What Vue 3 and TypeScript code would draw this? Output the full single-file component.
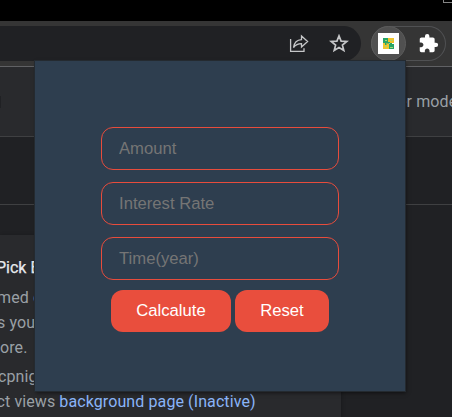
<script setup lang="ts">
import { ref } from 'vue'

interface Field {
  name: string
  placeholder: string
}

const fields: Field[] = [
  { name: 'amount', placeholder: 'Amount' },
  { name: 'rate', placeholder: 'Interest Rate' },
  { name: 'time', placeholder: 'Time(year)' },
]
const values = ref<Record<string, string>>({ amount: '', rate: '', time: '' })

function reset(): void {
  values.value = { amount: '', rate: '', time: '' }
}
</script>

<template>
  <div class="window">
    <div class="titlebar"><span class="control"></span></div>
    <div class="toolbar">
      <div class="omnibox">
        <svg class="share" width="20" height="19" viewBox="0 0 20 19">
          <path d="M1.6 5V17.3H15V14.2M4.5 13.5C5.2 8.8 8 6 12.5 5.7V2L18.6 7.6L12.5 13V9.6C9 9.6 6.6 10.7 4.5 13.5Z" />
        </svg>
        <svg class="star" width="20" height="19" viewBox="0 0 20 19">
          <path d="M10 1.9L12.1 7.1L17.8 7.5L13.4 11.1L14.8 16.5L10 13.6L5.2 16.5L6.6 11.1L2.2 7.5L7.9 7.1Z" />
        </svg>
      </div>
      <div class="extensions">
        <div class="active-extension">
          <svg width="21" height="21" viewBox="0 0 21 21">
            <path fill="#fff" d="M0 0H21V21H0Z" />
            <path fill="#27a567" d="M5 5H10V10H5ZM11 11H16V16H11Z" />
            <path fill="#f0c52e" d="M10 5H16V10H10ZM5 10H11V16H5Z" />
            <path fill="#27a567" d="M9 9H12V10.5H9ZM12 10H14V12H12ZM7 10H8.5V12H7Z" />
            <path stroke="#a7d878" d="M7 7.5H9M12 14.5H15M12.5 7.5H14.5M7 13.5H9" />
          </svg>
        </div>
        <svg class="puzzle" width="21" height="21" viewBox="0 0 24 24">
          <path d="M20.5 11H19V7c0-1.1-.9-2-2-2h-4V3.500a2.500 2.500 0 0 0-5 0V5H4c-1.100 0-1.990.9-1.990 2v3.800H3.500c1.490 0 2.700 1.210 2.700 2.700s-1.210 2.700-2.700 2.700H2V20c0 1.100.9 2 2 2h3.800v-1.500c0-1.490 1.210-2.700 2.700-2.700s2.700 1.210 2.700 2.700V22H17c1.100 0 2-.9 2-2v-4h1.500a2.500 2.500 0 0 0 0-5z" />
        </svg>
      </div>
    </div>
    <div class="page">
      <div class="page-header"><span class="search-edge"></span><span class="mode">er mode</span></div>
      <div class="page-strip"></div>
      <div class="page-body">
        <article class="card">
          <h2 class="title">Pick E</h2>
          <p class="line named">med c</p>
          <p class="line you">s you</p>
          <p class="line more">ore.</p>
          <p class="line id">cpnig</p>
          <p class="line views">ct views <a>background page (Inactive)</a></p>
        </article>
      </div>
    </div>

    <form class="popup" @submit.prevent>
      <input
        v-for="field in fields"
        :key="field.name"
        v-model="values[field.name]"
        class="field"
        type="text"
        :placeholder="field.placeholder"
      />
      <div class="actions">
        <button class="calculate" type="submit">Calcalute</button>
        <button class="reset" type="button" @click="reset">Reset</button>
      </div>
    </form>
  </div>
</template>

<style>
body {
  background: #202124;
}
</style>

<style scoped>
.window {
  position: relative;
  width: 452px;
  height: 417px;
  overflow: hidden;
  background: #202124;
  font-family: Roboto, sans-serif;
}
.window *,
.window *::before {
  box-sizing: border-box;
}
.titlebar {
  display: flex;
  justify-content: flex-end;
  height: 21px;
  background: #000;
}
.control {
  width: 9px;
  height: 3px;
  border: solid #858585;
  border-width: 0 0 1px 1px;
}
.toolbar {
  display: flex;
  gap: 10px;
  height: 46px;
  padding-top: 5px;
  background: #353535;
  border-bottom: 1px solid #606164;
}
.omnibox {
  display: flex;
  justify-content: flex-end;
  align-items: center;
  gap: 20px;
  width: 361px;
  height: 35px;
  padding-right: 12.5px;
  border-radius: 0 18px 18px 0;
  background: #202124;
}
.share,
.star {
  fill: none;
  stroke: #c5c6c8;
}
.share {
  stroke-width: 1.3;
}
.star {
  stroke-width: 1.7;
}
.extensions {
  display: flex;
  align-items: center;
  gap: 12px;
  width: 75px;
  height: 35px;
  border-radius: 18px;
  box-shadow: inset 0 0 0 1px #505153;
}
.active-extension {
  display: flex;
  align-items: center;
  justify-content: center;
  width: 35px;
  height: 35px;
  border-radius: 50%;
  background: #505050;
  border: 1px solid #5b5b5b;
}
.puzzle {
  fill: #fff;
}
.page-header {
  display: flex;
  align-items: center;
  justify-content: space-between;
  height: 70px;
  background: #292a2d;
  border-bottom: 1px solid #3f4042;
  color: #9aa0a6;
  font-size: 16px;
  letter-spacing: 0.1px;
}
.search-edge {
  width: 1px;
  height: 12px;
  background: #202124;
}
.mode {
  width: 54px;
  white-space: nowrap;
}
.page-strip {
  height: 68px;
  border-bottom: 1px solid #3f4042;
}
.page-body {
  padding-top: 30px;
}
.card {
  width: 341px;
  height: 182px;
  padding-top: 20px;
  background: #292a2d;
  box-shadow: 0 1px 4px #0005;
  color: #9aa0a6;
  font-size: 16px;
  letter-spacing: 0.1px;
  white-space: nowrap;
}
.title,
.line {
  height: 25px;
  margin: 0;
  line-height: 25px;
}
.title {
  height: 30px;
  margin-left: -4px;
  color: #e8eaed;
  font-size: 16px;
  font-weight: 400;
  letter-spacing: 0;
  -webkit-text-stroke: 0.25px #e8eaed;
}
.named {
  margin-left: -3px;
}
.you {
  margin-left: -3px;
}
.more {
  height: 29px;
}
.id {
  margin-left: -2px;
}
.views {
  margin-left: -3.5px;
}
.views a {
  color: #8ab4f8;
}
.popup {
  position: absolute;
  top: 61px;
  left: 35px;
  display: flex;
  flex-direction: column;
  align-items: center;
  gap: 12px;
  width: 370px;
  height: 330px;
  padding-top: 66px;
  background: #2e3e4f;
  box-shadow: 0 0 0 1px #242a30, 1px 2px 4px #0008;
}
.field {
  width: 238px;
  height: 43px;
  padding: 0 17px;
  border: 1px solid #e74c3c;
  border-radius: 12px;
  outline: 0;
  background: transparent;
  color: #fff;
  font: 16.67px "Liberation Sans", Arial, sans-serif;
}
.field::placeholder {
  color: #757575;
}
.actions {
  display: flex;
  gap: 4px;
  margin-top: -2px;
}
.actions button {
  height: 42px;
  padding: 0;
  border: 0;
  border-radius: 12px;
  background: #e94e3d;
  color: #fff;
  font: 16.67px "Liberation Sans", Arial, sans-serif;
}
.actions .calculate {
  width: 120px;
}
.actions .reset {
  width: 94px;
}
</style>
